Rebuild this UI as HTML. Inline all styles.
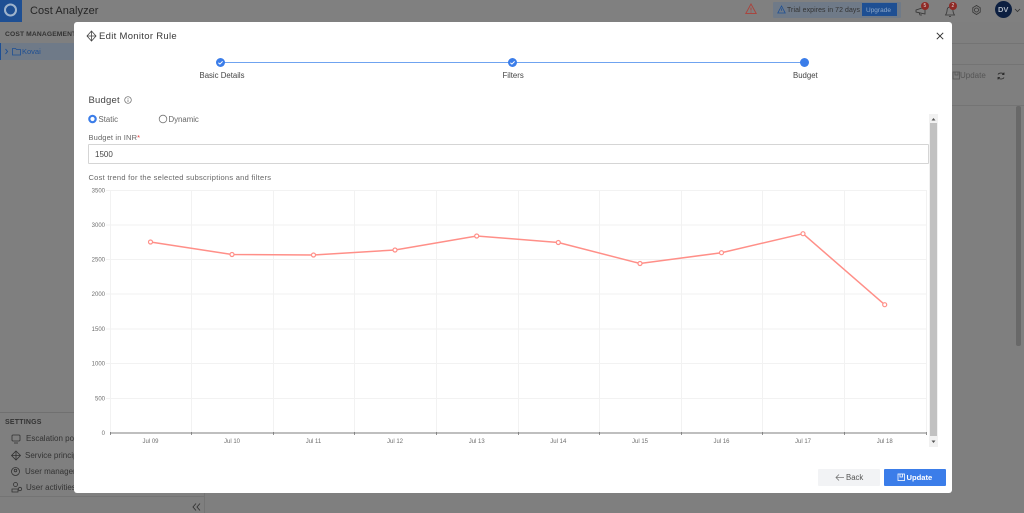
<!DOCTYPE html>
<html><head><meta charset="utf-8"><style>
html,body{margin:0;padding:0;width:1024px;height:513px;overflow:hidden;background:#7f7f7f}
body{position:relative;font-family:"Liberation Sans",sans-serif;filter:blur(.3px)}
.t{position:absolute;white-space:nowrap;line-height:1}
.b{position:absolute}
svg{position:absolute;overflow:visible}
</style></head><body>
<!-- background (dimmed) -->
<div class="b" style="left:0;top:0;width:1024px;height:22px;background:#808080"></div>
<div class="b" style="left:0;top:0;width:22px;height:22px;background:#1e4f93"></div>
<svg style="left:0;top:0" width="22" height="22"><circle cx="10.500" cy="10" r="5.500" fill="none" stroke="#9fb4cc" stroke-width="2"/></svg>
<div class="t" style="left:30px;top:5.500px;font-size:11px;color:#262626;letter-spacing:.05px">Cost Analyzer</div>
<div class="b" style="left:0;top:43px;width:74px;height:17px;background:#6f7a88;border-left:1px solid #1e4f93;box-sizing:border-box"></div>
<div class="t" style="left:5px;top:32px;font-size:6.700px;font-weight:bold;color:#333;letter-spacing:.15px">COST MANAGEMENT</div>
<svg style="left:0;top:43px" width="74" height="17"><path d="M5.500 6l2 2.500-2 2.500" fill="none" stroke="#1e4f93" stroke-width="1"/><path d="M12.500 5.500h3l1 1h4v5.500h-8z" fill="none" stroke="#1e4f93" stroke-width=".8"/></svg>
<div class="t" style="left:22px;top:47.500px;font-size:7.500px;color:#1e4f93">Kovai</div>
<div class="b" style="left:0;top:412px;width:74px;height:1px;background:#707070"></div>
<div class="t" style="left:5px;top:419px;font-size:7px;font-weight:bold;color:#333;letter-spacing:.2px">SETTINGS</div>
<div class="t" style="left:26px;top:435px;font-size:8px;color:#333">Escalation poli</div>
<div class="t" style="left:25px;top:452px;font-size:8px;color:#333">Service princip</div>
<div class="t" style="left:25px;top:468px;font-size:8px;color:#333">User managem</div>
<div class="t" style="left:26px;top:484px;font-size:8px;color:#333">User activities</div>
<svg style="left:0;top:430px" width="74" height="70" fill="none" stroke="#333" stroke-width=".8">
<rect x="12" y="5" width="8" height="6" rx="1"/><path d="M14 13h4"/>
<path d="M16 21l4.500 4.500-4.500 4.500-4.500-4.500zM16 21v9M11.500 25.500h9"/>
<circle cx="15.500" cy="41.500" r="4"/><circle cx="15.500" cy="40.500" r="1.300"/>
<circle cx="15.500" cy="54.500" r="2"/><path d="M12 62v-3h6v3z"/><circle cx="20" cy="59" r="1.700"/>
</svg>
<div class="b" style="left:0;top:496px;width:204px;height:1px;background:#747474"></div>
<div class="b" style="left:204px;top:493px;width:1px;height:20px;background:#747474"></div>
<svg style="left:192px;top:503px" width="10" height="9" fill="none" stroke="#333" stroke-width=".9"><path d="M4 .5L1 4l3 3.500M8 .5L5 4l3 3.500"/></svg>
<!-- header right -->
<svg style="left:745px;top:3px" width="13" height="12" fill="none" stroke="#a8463f" stroke-width="1"><path d="M6 1L.8 10.500h10.400zM6 4.500v3M6 8.500v1"/></svg>
<div class="b" style="left:773px;top:2px;width:128px;height:16px;background:#6f7a88;border-radius:1px"></div>
<svg style="left:777px;top:5px" width="9" height="9" fill="none" stroke="#1e4f93" stroke-width=".8"><path d="M4.500 1L.8 8h7.400zM4.500 3.500v2.300"/></svg>
<div class="t" style="left:787px;top:7.500px;font-size:6.900px;color:#333;letter-spacing:.1px">Trial expires in 72 days</div>
<div class="b" style="left:862px;top:3px;width:35px;height:13px;background:#1e4f93"></div>
<div class="t" style="left:866px;top:7.500px;font-size:6.500px;color:#8fa8c8">Upgrade</div>
<svg style="left:915px;top:3px" width="70" height="16" fill="none" stroke="#333" stroke-width=".8"><path d="M1 7l9-3v7l-9-2zM4 9.500l1 2.500h2"/><path d="M35 4c-2.500 0-3 2-3 4s-1 3-1.500 4h9c-.5-1-1.500-2-1.500-4s-.5-4-3-4zM34 13.500h2"/><circle cx="61.500" cy="7" r="2"/><path d="M61.500 2.500l3.700 2.200v4.500l-3.700 2.300-3.700-2.300V4.700z"/></svg>
<div class="b" style="left:921px;top:2px;width:8px;height:8px;border-radius:50%;background:#8f2a26"></div>
<div class="b" style="left:949px;top:2px;width:8px;height:8px;border-radius:50%;background:#8f2a26"></div>
<div class="t" style="left:923.500px;top:3.500px;font-size:5px;color:#ddd">5</div>
<div class="t" style="left:951.500px;top:3.500px;font-size:5px;color:#ddd">2</div>
<div class="b" style="left:995px;top:1px;width:17px;height:17px;border-radius:50%;background:#0c1f40"></div>
<div class="t" style="left:998px;top:6px;font-size:7.500px;font-weight:bold;color:#aeb6c2">DV</div>
<svg style="left:1014px;top:8px" width="7" height="5" fill="none" stroke="#333" stroke-width=".8"><path d="M1 1l2.500 2.500L6 1"/></svg>
<div class="b" style="left:952px;top:43px;width:72px;height:1px;background:#747474"></div>
<div class="b" style="left:952px;top:64px;width:72px;height:1px;background:#747474"></div>
<div class="b" style="left:952px;top:105px;width:72px;height:1px;background:#747474"></div>
<svg style="left:952px;top:71px" width="60" height="12" fill="none" stroke="#555" stroke-width=".8"><rect x="1" y="1" width="6.500" height="7"/><path d="M3 1v3h3V1"/><path stroke="#222" d="M46 3.500c1-2 5-2 6 0M52 1.500v2h-2M52 6.500c-1 2-5 2-6 0M46 8.500v-2h2"/></svg>
<div class="t" style="left:960px;top:71.500px;font-size:8px;color:#555">Update</div>
<div class="b" style="left:1016px;top:106px;width:5px;height:240px;background:#686868;border-radius:2px"></div>
<!-- modal -->
<div class="b" style="left:74px;top:22px;width:878px;height:471px;background:#fff;border-radius:3px"></div>
<svg style="left:86px;top:30px" width="12" height="12" fill="none" stroke="#444" stroke-width=".8"><path d="M5.500 1l4.500 5-4.500 5L1 6zM5.500 1v10M1 6h9"/></svg>
<div class="t" style="left:99px;top:31.500px;font-size:9.500px;color:#3a3a3a;letter-spacing:.3px">Edit Monitor Rule</div>
<svg style="left:936px;top:32px" width="8" height="8" fill="none" stroke="#333" stroke-width="1"><path d="M.8.800l6.400 6.400M7.200.800L.8 7.200"/></svg>
<!-- stepper -->
<div class="b" style="left:220px;top:62px;width:584px;height:1px;background:#6fa3f0"></div>
<svg style="left:215px;top:57px" width="600" height="12"><circle cx="5.500" cy="5.500" r="4.500" fill="#3b7de9"/><path d="M3.400 5.700l1.500 1.400 2.700-2.700" fill="none" stroke="#fff" stroke-width="1"/><circle cx="297.500" cy="5.500" r="4.500" fill="#3b7de9"/><path d="M295.400 5.700l1.500 1.400 2.700-2.700" fill="none" stroke="#fff" stroke-width="1"/><circle cx="589.500" cy="5.500" r="4.500" fill="#3b7de9"/></svg>
<div class="t" style="left:199.500px;top:71.500px;font-size:7.800px;color:#444">Basic Details</div>
<div class="t" style="left:502.500px;top:71.500px;font-size:7.800px;color:#444">Filters</div>
<div class="t" style="left:793px;top:71.500px;font-size:7.800px;color:#444">Budget</div>
<!-- form -->
<div class="t" style="left:88.500px;top:95.500px;font-size:9.500px;color:#444;letter-spacing:.2px">Budget</div>
<svg style="left:124px;top:96px" width="8" height="8" fill="none" stroke="#666" stroke-width=".7"><circle cx="4" cy="4" r="3.300"/><path d="M4 3.500v2.500M4 2v.800"/></svg>
<svg style="left:88px;top:114px" width="80" height="11"><circle cx="4.500" cy="5" r="3.200" fill="#fff" stroke="#3b7de9" stroke-width="2.200"/><circle cx="75" cy="5" r="3.800" fill="#fff" stroke="#777" stroke-width=".8"/></svg>
<div class="t" style="left:98.500px;top:115.500px;font-size:7.800px;color:#666">Static</div>
<div class="t" style="left:168.500px;top:115.500px;font-size:7.800px;color:#666">Dynamic</div>
<div class="t" style="left:88.500px;top:134px;font-size:7.500px;color:#666;letter-spacing:.15px">Budget in INR<span style="color:#e03a3a">*</span></div>
<div class="b" style="left:88px;top:144px;width:841px;height:20px;box-sizing:border-box;border:1px solid #d5d5d5;border-radius:1px"></div>
<div class="t" style="left:95px;top:150.500px;font-size:8px;color:#444">1500</div>
<div class="t" style="left:88.500px;top:174px;font-size:7.500px;color:#666;letter-spacing:.27px">Cost trend for the selected subscriptions and filters</div>
<!-- scrollbar -->
<div class="b" style="left:929px;top:114px;width:9px;height:333px;background:#f1f1f1"></div>
<div class="b" style="left:930px;top:123px;width:7px;height:313px;background:#c1c1c1"></div>
<svg style="left:929px;top:114px" width="9" height="333" fill="#555"><path d="M4.500 4l2 2.500h-4zM4.500 329l2-2.500h-4z"/></svg>
<!-- chart -->
<svg style="left:0;top:0" width="1024" height="513" font-family="Liberation Sans, sans-serif">
<g stroke="#f2f2f2" stroke-width="1" fill="none">
<path d="M106 190.500H926M106 225H926M106 259.500H926M106 294H926M106 329H926M106 363.500H926M106 398.500H926"/>
<path d="M110.500 190V433M191.500 190V433M273.500 190V433M354.500 190V433M436.500 190V433M518.500 190V433M599.500 190V433M681.500 190V433M762.500 190V433M844.500 190V433M926.500 190V433"/>
</g>
<path d="M110 433H926" stroke="#999" stroke-width="1.300"/>
<path d="M110.500 432v3M191.500 432v3M273.500 432v3M354.500 432v3M436.500 432v3M518.500 432v3M599.500 432v3M681.500 432v3M762.500 432v3M844.500 432v3M926.500 432v3" stroke="#777" stroke-width=".8"/>
<g fill="#6e6e6e" font-size="6" text-anchor="end">
<text x="105" y="192.500">3500</text><text x="105" y="227">3000</text><text x="105" y="261.500">2500</text><text x="105" y="296">2000</text><text x="105" y="331">1500</text><text x="105" y="365.500">1000</text><text x="105" y="400.500">500</text><text x="105" y="435">0</text>
</g>
<g fill="#6e6e6e" font-size="6" text-anchor="middle">
<text x="150.500" y="443">Jul 09</text><text x="232" y="443">Jul 10</text><text x="313.500" y="443">Jul 11</text><text x="395" y="443">Jul 12</text><text x="476.700" y="443">Jul 13</text><text x="558.300" y="443">Jul 14</text><text x="640" y="443">Jul 15</text><text x="721.500" y="443">Jul 16</text><text x="803" y="443">Jul 17</text><text x="884.700" y="443">Jul 18</text>
</g>
<polyline points="150.500,242 232,254.500 313.500,255 395,250 476.700,236 558.300,242.500 640,263.500 721.500,252.700 803,233.700 884.700,304.700" fill="none" stroke="#ff8f88" stroke-width="1.500"/>
<g fill="#fff" stroke="#ff8f88" stroke-width="1.200">
<circle cx="150.500" cy="242" r="2"/><circle cx="232" cy="254.500" r="2"/><circle cx="313.500" cy="255" r="2"/><circle cx="395" cy="250" r="2"/><circle cx="476.700" cy="236" r="2"/><circle cx="558.300" cy="242.500" r="2"/><circle cx="640" cy="263.500" r="2"/><circle cx="721.500" cy="252.700" r="2"/><circle cx="803" cy="233.700" r="2"/><circle cx="884.700" cy="304.700" r="2"/>
</g>
</svg>
<!-- footer buttons -->
<div class="b" style="left:818px;top:469px;width:62px;height:17px;background:#f2f3f5;border-radius:1px"></div>
<svg style="left:835px;top:473px" width="10" height="9" fill="none" stroke="#777" stroke-width=".8"><path d="M9 4.500H1M4 1.500l-3 3 3 3"/></svg>
<div class="t" style="left:846px;top:473.500px;font-size:7.800px;color:#555">Back</div>
<div class="b" style="left:884px;top:469px;width:62px;height:17px;background:#3b7de9;border-radius:1px"></div>
<svg style="left:897px;top:473px" width="9" height="9" fill="none" stroke="#fff" stroke-width=".8"><rect x="1" y="1" width="6.500" height="6.500"/><path d="M3 1v3h2.500V1"/></svg>
<div class="t" style="left:906.500px;top:473.500px;font-size:7.600px;font-weight:bold;color:#fff">Update</div>
</body></html>
